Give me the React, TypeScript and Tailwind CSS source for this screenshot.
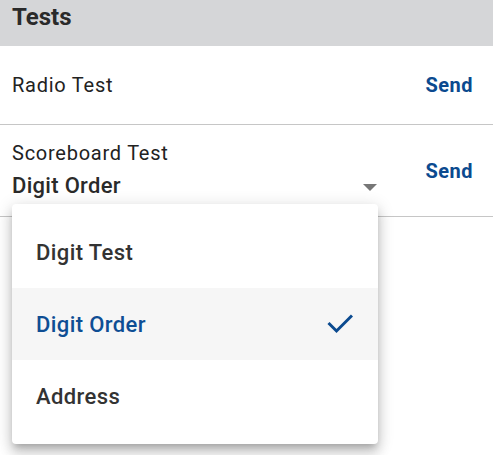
import React from "react";

export default function App() {
  return (
    <div className="relative w-[493px] h-[455px] bg-white overflow-hidden text-[#222222]" style={{ fontFamily: "Roboto, 'Noto Sans', sans-serif" }}>
      <div className="h-[46px] bg-[#d5d6d8] px-3 pt-[1px]">
        <span className="text-[24px] font-bold leading-[32px] text-[#2a2a2a]">Tests</span>
      </div>
      <div className="h-[79px] flex items-center pl-3 pr-5 border-b border-[#c6c6c6]">
        <span className="text-[20px] leading-none tracking-[0.75px]">Radio Test</span>
        <span className="ml-auto text-[20px] font-bold tracking-[0.5px] text-[#0b4a8f]">Send</span>
      </div>
      <div className="h-[92px] flex items-center pl-3 pr-5 border-b border-[#c6c6c6]">
        <div className="relative w-[366px] flex flex-col">
          <span className="text-[20px] leading-[24px] tracking-[0.75px]">Scoreboard Test</span>
          <span className="mt-[6px] text-[22px] font-medium leading-[30px] tracking-[0.3px] text-[#2a2a2a]">Digit Order</span>
          <svg className="absolute right-[1px] top-[43px]" width="14" height="7" viewBox="0 0 14 7">
            <path d="M0 0 L14 0 L7 7 Z" fill="#777777" />
          </svg>
        </div>
        <span className="ml-auto text-[20px] font-bold tracking-[0.5px] text-[#0b4a8f]">Send</span>
      </div>

      <div className="absolute left-[12px] top-[204px] w-[366px] bg-white rounded-[4px] py-[12px] shadow-[0_5px_6px_-3px_rgba(0,0,0,0.2),0_9px_12px_1px_rgba(0,0,0,0.14),0_3px_16px_2px_rgba(0,0,0,0.12)]">
        <div className="h-[72px] flex items-center px-6 text-[22px] font-medium tracking-[0.4px] text-[#333333]">Digit Test</div>
        <div className="h-[72px] flex items-center px-6 text-[22px] font-medium tracking-[0.4px] text-[#0e4e94] bg-[#f6f6f6]">
          <span>Digit Order</span>
          <svg className="ml-auto mr-[1px]" width="26" height="20" viewBox="0 0 26 20">
            <polyline points="1.5,9 9.5,17 25,1.5" fill="none" stroke="#0b4a8f" strokeWidth="3" />
          </svg>
        </div>
        <div className="h-[72px] flex items-center px-6 text-[22px] font-medium tracking-[0.4px] text-[#333333]">Address</div>
      </div>
    </div>
  );
}
